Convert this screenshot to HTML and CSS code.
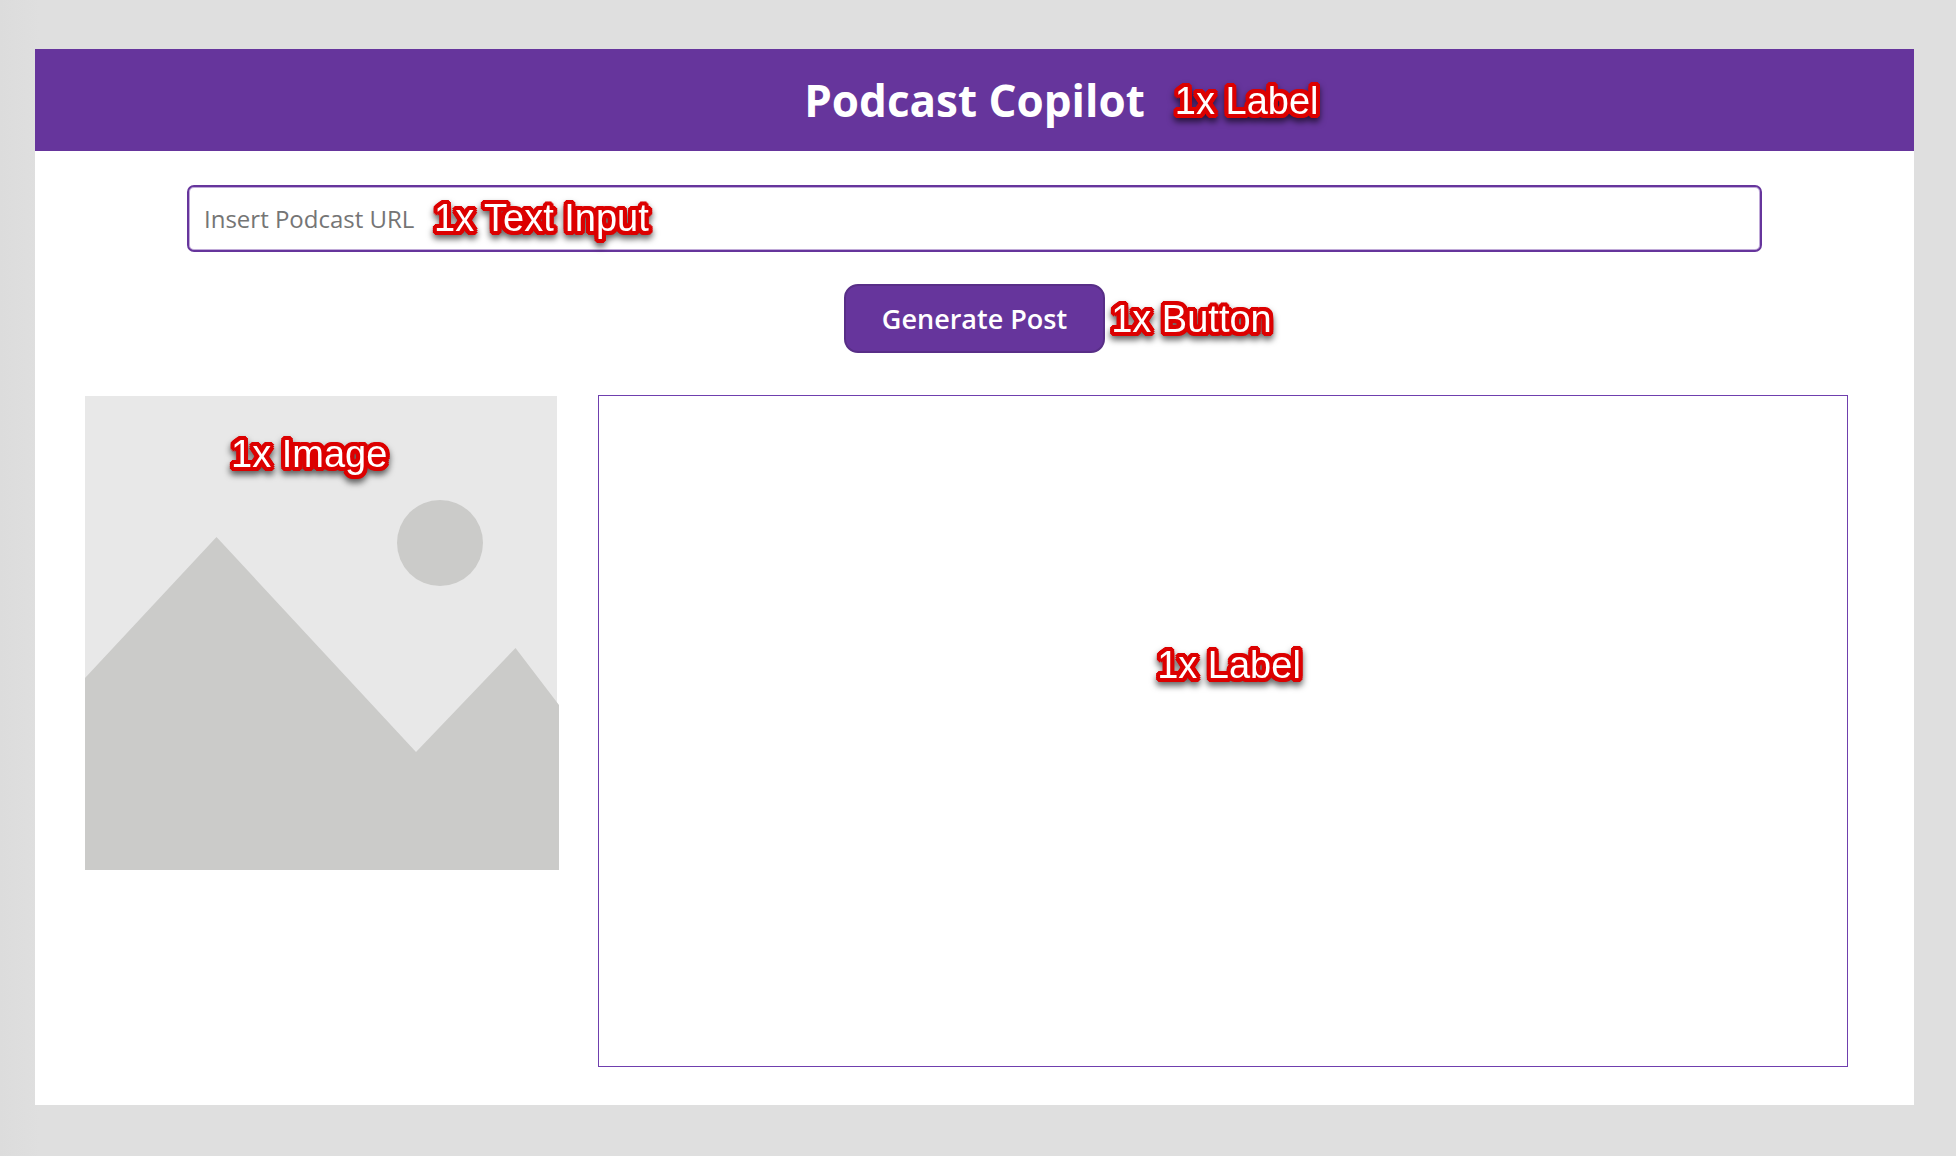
FILE: index.html
```html
<!DOCTYPE html>
<html lang="en">
<head>
<meta charset="utf-8">
<title>Podcast Copilot</title>
<link rel="stylesheet" href="styles.css">
</head>
<body>
<main class="app">
  <header class="app-header">
    <div class="anchor">
      <h1 class="title">Podcast Copilot</h1>
      <span class="note note-title">1x Label</span>
    </div>
  </header>
  <form class="form">
    <div class="anchor field">
      <input class="url" type="text" aria-label="Podcast URL" placeholder="Insert Podcast URL">
      <span class="note note-input">1x Text Input</span>
    </div>
    <div class="anchor">
      <button class="generate" type="button">Generate Post</button>
      <span class="note note-button">1x Button</span>
    </div>
  </form>
  <section class="result">
    <div class="anchor picture">
      <svg class="placeholder" viewBox="0 0 474 474" role="img" aria-label="Image placeholder">
        <rect width="472" height="474" fill="#e8e8e8"/>
        <circle cx="355" cy="147" r="43" fill="#cbcbc9"/>
        <path d="M0 282 L131.500 141 L331 356 L430.500 252 L474 309 V474 H0 Z" fill="#cbcbc9"/>
      </svg>
      <span class="note note-image">1x Image</span>
    </div>
    <div class="post">
      <span class="note">1x Label</span>
    </div>
  </section>
</main>
</body>
</html>
```
FILE: styles.css
```css
* {
  box-sizing: border-box;
}

body {
  margin: 0;
  min-height: 100vh;
  padding: 49px 42px 51px 35px;
  background: linear-gradient(to right, #dcdcdc, #dfdfdf 40px);
  font-family: "Open Sans", "Liberation Sans", sans-serif;
}

.app {
  background: #fff;
  padding-bottom: 38px;
}

.app-header {
  display: flex;
  justify-content: center;
  padding: 22px;
  background: #66359c;
}

.anchor {
  position: relative;
}

.title {
  margin: 0;
  color: #fff;
  font-size: 44px;
  font-weight: 700;
  line-height: 58px;
}

.form {
  display: flex;
  flex-direction: column;
  align-items: center;
  gap: 32px;
  padding: 34px 152px 42px;
}

.field {
  width: 100%;
}

.url {
  display: block;
  width: 100%;
  height: 67px;
  padding: 0 15px;
  border: 2px solid #66359c;
  border-radius: 7px;
  background: #fff;
  box-shadow: inset 0 0 0 1px #c0aad8;
  color: #333;
  font: 400 24px "Open Sans", sans-serif;
}

.url::placeholder {
  color: #757575;
  opacity: 1;
}

.generate {
  display: block;
  height: 69px;
  padding: 0 36px;
  border: 2px solid #582e87;
  border-radius: 14px;
  background: #66359c;
  color: #fff;
  font: 600 27px "Open Sans", sans-serif;
}

.result {
  display: grid;
  grid-template-columns: 474fr 1250fr;
  align-items: start;
  gap: 39px;
  padding: 0 66px 0 50px;
}

.placeholder {
  display: block;
  width: 100%;
  margin-top: 1px;
}

.post {
  display: flex;
  justify-content: center;
  min-height: 672px;
  padding: 247px 0 0 12px;
  border: 1px solid #6f3fae;
}

/* Annotation captions: a round red outline built from a ring of shadows */
.note {
  color: #fff;
  font: 400 38px/44px "Liberation Sans", Arial, sans-serif;
  white-space: nowrap;
  text-shadow:
    4px 0 #dc0000, -4px 0 #dc0000, 0 4px #dc0000, 0 -4px #dc0000,
    3px 3px #dc0000, -3px 3px #dc0000, 3px -3px #dc0000, -3px -3px #dc0000,
    4px 2px #dc0000, -4px 2px #dc0000, 4px -2px #dc0000, -4px -2px #dc0000,
    2px 4px #dc0000, -2px 4px #dc0000, 2px -4px #dc0000, -2px -4px #dc0000,
    2px 0 #dc0000, -2px 0 #dc0000, 0 2px #dc0000, 0 -2px #dc0000;
  filter: drop-shadow(0 4px 3px rgba(0, 0, 0, 0.6));
}

.anchor .note {
  position: absolute;
}

.note-title {
  top: 8px;
  left: calc(100% + 30px);
}

.note-input {
  top: 11px;
  left: 247px;
}

.note-button {
  top: 13px;
  left: calc(100% + 6px);
}

.note-image {
  top: 37px;
  left: 146px;
}
```
